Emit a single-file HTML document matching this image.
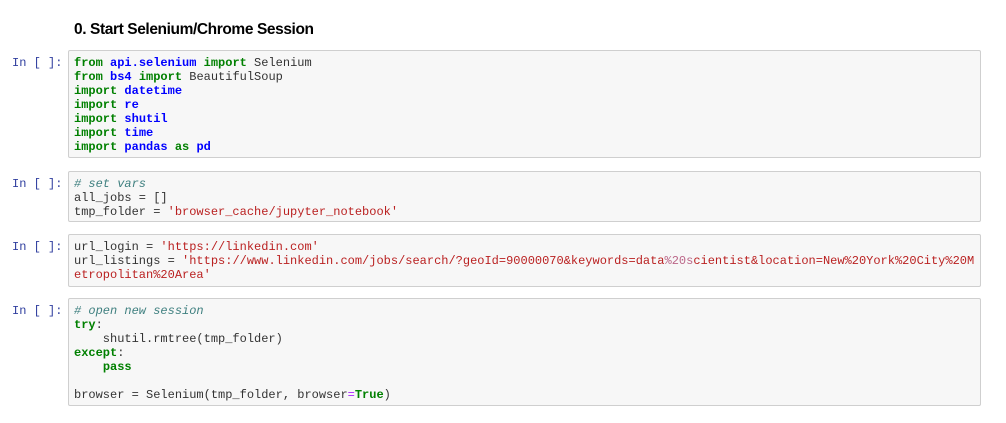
<!DOCTYPE html>
<html><head><style>
body{margin:0;background:#fff;width:1006px;height:423px;overflow:hidden;position:relative;font-family:"Liberation Mono",monospace;}
h1{position:absolute;left:74px;top:21px;margin:0;font:bold 15.5px "Liberation Sans",sans-serif;color:#000;letter-spacing:-0.4px}
.p{position:absolute;left:12px;font-size:12px;line-height:14px;color:#303f9f;}
.c{position:absolute;left:68px;width:913px;background:#f7f7f7;border:1px solid #cfcfcf;border-radius:2px;box-sizing:border-box;padding:5px 5px;font-size:12px;line-height:14px;white-space:pre;color:#333;}
.k{color:#008000;font-weight:bold}.n{color:#0000ff;font-weight:bold}.s{color:#ba2121}.i{color:#bb6688}.cm{color:#408080;font-style:italic}.o{color:#aa22ff}
</style></head><body>
<h1>0. Start Selenium/Chrome Session</h1>
<div class="p" style="top:56px">In [ ]:</div>
<div class="c" style="top:50px;height:108px"><span class="k">from</span> <span class="n">api.selenium</span> <span class="k">import</span> Selenium
<span class="k">from</span> <span class="n">bs4</span> <span class="k">import</span> BeautifulSoup
<span class="k">import</span> <span class="n">datetime</span>
<span class="k">import</span> <span class="n">re</span>
<span class="k">import</span> <span class="n">shutil</span>
<span class="k">import</span> <span class="n">time</span>
<span class="k">import</span> <span class="n">pandas</span> <span class="k">as</span> <span class="n">pd</span></div>
<div class="p" style="top:177px">In [ ]:</div>
<div class="c" style="top:171px;height:51px"><span class="cm"># set vars</span>
all_jobs = []
tmp_folder = <span class="s">'browser_cache/jupyter_notebook'</span></div>
<div class="p" style="top:240px">In [ ]:</div>
<div class="c" style="top:234px;height:53px">url_login = <span class="s">'https://linkedin.com'</span>
url_listings = <span class="s">'https://www.linkedin.com/jobs/search/?geoId=90000070&amp;keywords=data</span><span class="i">%20s</span><span class="s">cientist&amp;location=New%20York%20City%20M</span>
<span class="s">etropolitan%20Area'</span></div>
<div class="p" style="top:304px">In [ ]:</div>
<div class="c" style="top:298px;height:108px"><span class="cm"># open new session</span>
<span class="k">try</span>:
    shutil.rmtree(tmp_folder)
<span class="k">except</span>:
    <span class="k">pass</span>

browser = Selenium(tmp_folder, browser<span class="o">=</span><span class="k">True</span>)</div>
</body></html>
